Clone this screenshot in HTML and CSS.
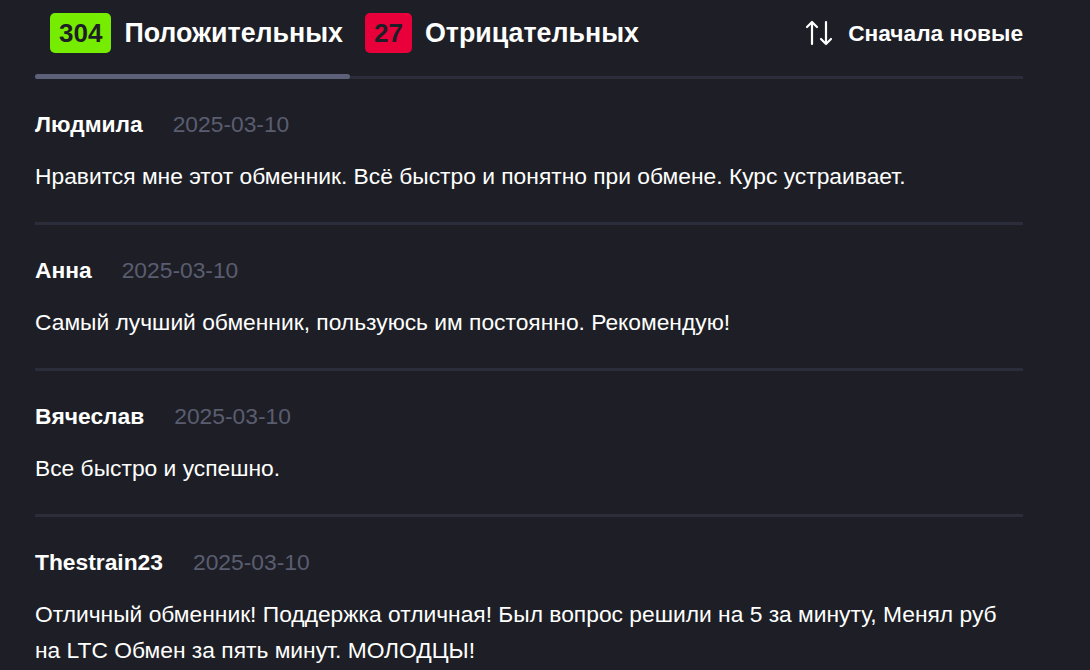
FILE: index.html
```html
<!DOCTYPE html>
<html lang="ru">
<head>
<meta charset="utf-8">
<link rel="stylesheet" href="styles.css">
</head>
<body>
<div class="wrap">
  <div class="tabs">
    <div class="tab active">
      <span class="badge pos">304</span>
      <span class="tab-label">Положительных</span>
    </div>
    <div class="tab">
      <span class="badge neg">27</span>
      <span class="tab-label">Отрицательных</span>
    </div>
    <div class="sort">
      <svg class="sort-icon" width="28" height="26" viewBox="0 0 28 26" fill="none" stroke="#fff" stroke-width="2.2" stroke-linecap="round" stroke-linejoin="round">
        <path d="M7 24V2M2 7l5-5 5 5"/>
        <path d="M21 2v22M16 19l5 5 5-5"/>
      </svg>
      <span class="sort-label">Сначала новые</span>
    </div>
  </div>

  <div class="review">
    <div class="meta"><span class="name">Людмила</span><span class="date">2025-03-10</span></div>
    <p class="text">Нравится мне этот обменник. Всё быстро и понятно при обмене. Курс устраивает.</p>
  </div>
  <div class="review">
    <div class="meta"><span class="name">Анна</span><span class="date">2025-03-10</span></div>
    <p class="text">Самый лучший обменник, пользуюсь им постоянно. Рекомендую!</p>
  </div>
  <div class="review">
    <div class="meta"><span class="name">Вячеслав</span><span class="date">2025-03-10</span></div>
    <p class="text">Все быстро и успешно.</p>
  </div>
  <div class="review">
    <div class="meta"><span class="name">Thestrain23</span><span class="date">2025-03-10</span></div>
    <p class="text">Отличный обменник! Поддержка отличная! Был вопрос решили на 5 за минуту, Менял руб на LTC Обмен за пять минут. МОЛОДЦЫ!</p>
  </div>
</div>
</body>
</html>
```

FILE: styles.css
```css
html, body {
  margin: 0;
  padding: 0;
  background: #1e1f26;
}
body {
  font-family: "Liberation Sans", Arial, sans-serif;
  color: #ffffff;
}
.wrap {
  width: 988px;
  margin-left: 35px;
}
.tabs {
  display: flex;
  align-items: stretch;
  height: 76px;
  border-bottom: 3px solid #2c2d3a;
}
.tab {
  position: relative;
  display: flex;
  align-items: center;
  gap: 13px;
  padding: 0 7px 0 15px;
  height: 66px;
}
.tab + .tab {
  padding-left: 15px;
}
.tab.active::after {
  content: "";
  position: absolute;
  left: 0;
  right: 0;
  bottom: -13px;
  height: 5px;
  border-radius: 3px;
  background: #5c6078;
}
.badge {
  display: inline-flex;
  align-items: center;
  justify-content: center;
  height: 40px;
  padding: 0 9px;
  border-radius: 5px;
  font-weight: 700;
  font-size: 26px;
  color: #1e1f26;
}
.badge.pos { background: #76ec00; }
.badge.neg { background: #e9003a; }
.tab-label {
  font-weight: 700;
  font-size: 26.8px;
  color: #ffffff;
}
.sort {
  margin-left: auto;
  display: flex;
  align-items: center;
  gap: 15px;
  height: 66px;
}
.sort-icon { display: block; }
.sort-label {
  font-weight: 700;
  font-size: 22.7px;
}
.review {
  border-bottom: 3px solid #2c2d3a;
  padding: 31px 0 28px;
}
.review:last-child { border-bottom: none; }
.meta {
  display: flex;
  align-items: baseline;
  gap: 30px;
  height: 28px;
  line-height: 28px;
}
.name {
  font-weight: 700;
  font-size: 22.8px;
}
.date {
  font-size: 22.8px;
  color: #5a5d70;
}
.text {
  margin: 20px 0 0;
  font-size: 22.8px;
  line-height: 36px;
  color: #ffffff;
}
```
